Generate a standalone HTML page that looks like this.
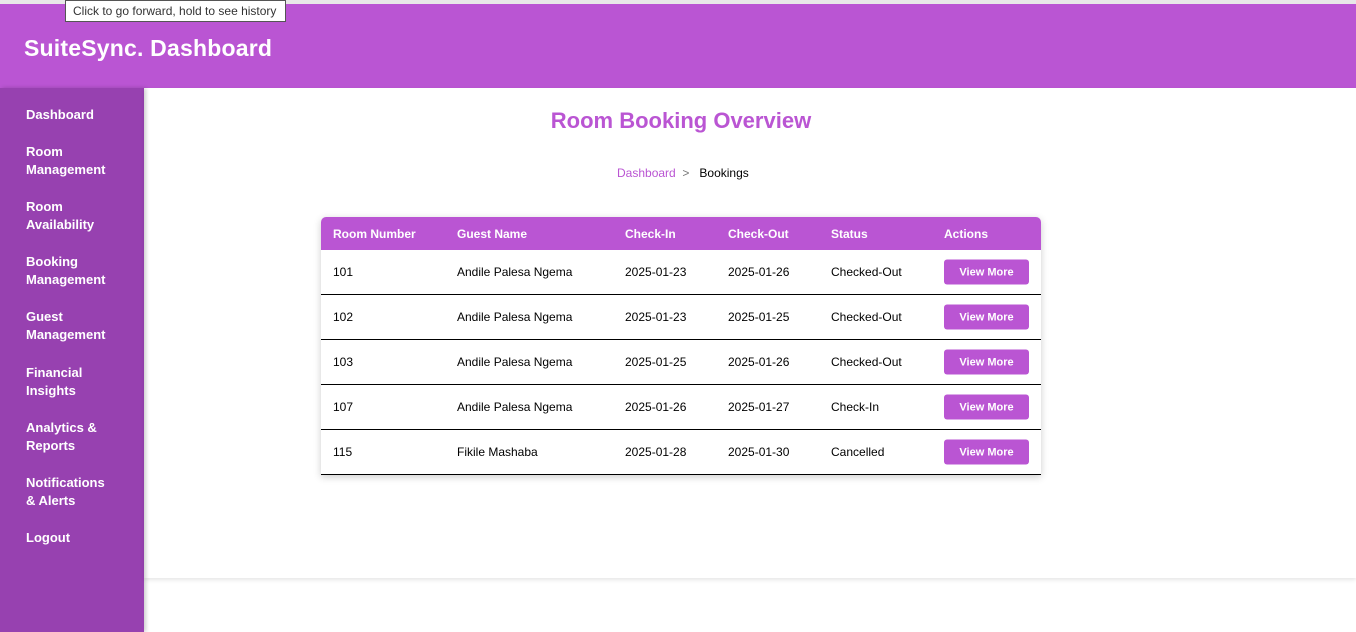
<!DOCTYPE html>
<html><head><style>
*{margin:0;padding:0;box-sizing:border-box}
body{width:1356px;height:632px;overflow:hidden;background:#fff;font-family:"Liberation Sans",sans-serif;position:relative}
.top{position:absolute;top:0;left:0;width:1356px;height:4px;background:#e8e8e8}
.hdr{position:absolute;top:4px;left:0;width:1356px;height:84px;background:#ba55d3}
.hdr h1{position:absolute;left:24px;top:31px;color:#fff;font-size:23px;font-weight:bold;letter-spacing:0.2px}
.tip{position:absolute;left:65px;top:0;width:221px;height:22px;background:#fff;border:1px solid #555;font-size:12px;color:#333;padding:3px 7px;z-index:5}
.side{position:absolute;top:88px;left:0;width:144px;height:544px;background:#9741b0;box-shadow:2px 0 4px rgba(0,0,0,.2)}
.side div{position:absolute;left:26px;color:#fff;font-size:13px;font-weight:bold;line-height:18px}
.main{position:absolute;left:144px;top:88px;width:1212px;height:490px;box-shadow:0 2px 4px rgba(0,0,0,.1)}
h2{position:absolute;width:1074px;text-align:center;color:#ba55d3;font-size:22px;font-weight:bold;left:144px;}
.bc{position:absolute;top:166px;left:617px;font-size:12px}
.bc a{color:#ba55d3}
.tbl{position:absolute;left:321px;top:217px;width:720px;background:#fff;box-shadow:0 2px 8px rgba(0,0,0,.2);border-radius:5px 5px 0 0;overflow:hidden}
.th{height:33px;background:#ba55d3;color:#fff;font-weight:bold;font-size:12px;position:relative}
.row{height:45px;border-bottom:1px solid #000;position:relative;font-size:12px;color:#000}
.th span,.row span{position:absolute;top:50%;transform:translateY(-50%)}
.btn{background:#ba55d3;color:#fff;font-weight:bold;font-size:11px;width:85px;height:25px;border-radius:3px;text-align:center;line-height:26px}
</style></head><body>
<div class="top"></div>
<div class="hdr"><h1>SuiteSync. Dashboard</h1></div>
<div class="tip">Click to go forward, hold to see history</div>
<div class="side">
<div style="top:18px">Dashboard</div>
<div style="top:55px">Room<br>Management</div>
<div style="top:110px">Room<br>Availability</div>
<div style="top:165px">Booking<br>Management</div>
<div style="top:220px">Guest<br>Management</div>
<div style="top:276px">Financial<br>Insights</div>
<div style="top:331px">Analytics &amp;<br>Reports</div>
<div style="top:386px">Notifications<br>&amp; Alerts</div>
<div style="top:441px">Logout</div>
</div>
<div class="main"></div>
<h2 style="top:108px">Room Booking Overview</h2>
<div class="bc"><a>Dashboard</a> <span style="color:#777">&nbsp;&gt;&nbsp;&nbsp;</span> Bookings</div>
<div class="tbl">
<div class="th"><span style="left:12px">Room Number</span><span style="left:136px">Guest Name</span><span style="left:304px">Check-In</span><span style="left:407px">Check-Out</span><span style="left:510px">Status</span><span style="left:623px">Actions</span></div>
<div class="row"><span style="left:12px">101</span><span style="left:136px">Andile Palesa Ngema</span><span style="left:304px">2025-01-23</span><span style="left:407px">2025-01-26</span><span style="left:510px">Checked-Out</span><span class="btn" style="left:623px">View More</span></div>
<div class="row"><span style="left:12px">102</span><span style="left:136px">Andile Palesa Ngema</span><span style="left:304px">2025-01-23</span><span style="left:407px">2025-01-25</span><span style="left:510px">Checked-Out</span><span class="btn" style="left:623px">View More</span></div>
<div class="row"><span style="left:12px">103</span><span style="left:136px">Andile Palesa Ngema</span><span style="left:304px">2025-01-25</span><span style="left:407px">2025-01-26</span><span style="left:510px">Checked-Out</span><span class="btn" style="left:623px">View More</span></div>
<div class="row"><span style="left:12px">107</span><span style="left:136px">Andile Palesa Ngema</span><span style="left:304px">2025-01-26</span><span style="left:407px">2025-01-27</span><span style="left:510px">Check-In</span><span class="btn" style="left:623px">View More</span></div>
<div class="row"><span style="left:12px">115</span><span style="left:136px">Fikile Mashaba</span><span style="left:304px">2025-01-28</span><span style="left:407px">2025-01-30</span><span style="left:510px">Cancelled</span><span class="btn" style="left:623px">View More</span></div>
</div>
</body></html>
